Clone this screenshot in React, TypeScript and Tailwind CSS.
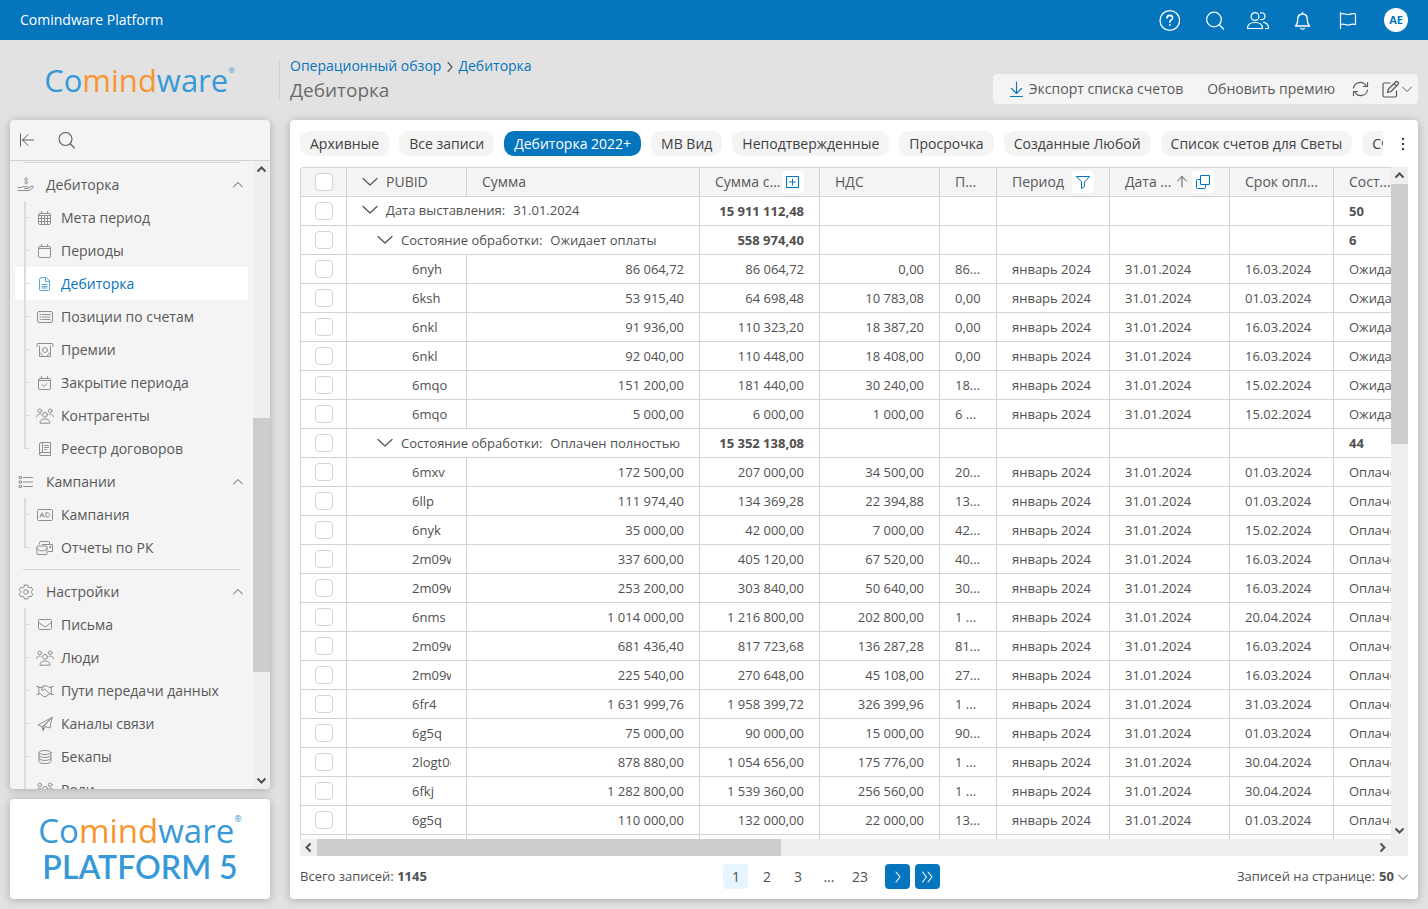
import React from 'react';

type IconProps = { w?: number; h?: number; className?: string; children: React.ReactNode };

const Icon: React.FC<IconProps> = ({ w = 18, h = 18, className = '', children }) => (
  <svg
    width={w}
    height={h}
    viewBox={`0 0 ${w} ${h}`}
    fill="none"
    stroke="currentColor"
    strokeLinecap="round"
    strokeLinejoin="round"
    aria-hidden="true"
    className={`shrink-0 ${className}`}
  >
    {children}
  </svg>
);

const ChevronDown = ({ className = '' }: { className?: string }) => (
  <Icon w={16} h={10} className={className}>
    <path d="M1 1.500 8 8l7-6.500" strokeWidth="1.200" />
  </Icon>
);

const SmallChevron = ({ className = '' }: { className?: string }) => (
  <Icon w={10} h={8} className={className}>
    <path d="M.5 2 5 6.500 9.500 2" />
  </Icon>
);

const PeopleIcon = () => (
  <Icon>
    <circle cx="9" cy="7.800" r="2.400" />
    <path d="M4 15.800c0-2.200 1.500-3.800 5-3.800s5 1.600 5 3.800z" />
    <circle cx="3.800" cy="3.800" r="1.800" />
    <circle cx="14.200" cy="3.800" r="1.800" />
    <path d="M.6 9.800c0-1.800 1.200-2.600 3-2.600.6 0 1 .1 1.400.3M17.400 9.800c0-1.800-1.200-2.600-3-2.600-.6 0-1 .1-1.400.3" />
  </Icon>
);

const CalendarBase = ({ children }: { children?: React.ReactNode }) => (
  <Icon>
    <rect x="2.500" y="4.500" width="12" height="11" rx="1.500" />
    <path d="M5.500 2.500v2M11.500 2.500v2M2.500 6.500h12" />
    {children}
  </Icon>
);

const icons: Record<string, React.ReactNode> = {
  hand: (
    <Icon>
      <path d="M1 11.500h3l2-.8h4c1.500 0 1.500 1.800 0 1.800H7.500M10.800 12l4-1.800c1.500-.5 2.400.8 1.200 1.600L12 14.500H1" />
      <path d="M10.800 3.300C10.300 2 7.400 2.200 7.600 3.700c.2 1.400 3.200.9 3.300 2.500 0 1.500-3 1.600-3.500.3M9.200 1.400v6.800" strokeWidth=".8" />
    </Icon>
  ),
  list: (
    <Icon>
      <path d="M6.500 4.500h9M6.500 9h9M6.500 13.500h9" />
      <path d="M2.500 3.500h2v2h-2zM2.500 8h2v2h-2zM2.500 12.500h2v2h-2z" />
    </Icon>
  ),
  gear: (
    <Icon>
      <path d="M7.500 2h3l.5 2 1.300.8 2-.6 1.500 2.600-1.500 1.500v1.400l1.500 1.500-1.500 2.600-2-.6-1.300.8-.5 2h-3L7 14l-1.300-.8-2 .6-1.500-2.600 1.500-1.500V8.300L2.200 6.800l1.500-2.600 2 .6L7 4z" />
      <circle cx="9" cy="9" r="2.300" />
    </Icon>
  ),
  calendarGrid: (
    <CalendarBase>
      <path d="M2.500 9.500h12M2.500 12.500h12M5.500 6.500v9M8.500 6.500v9M11.500 6.500v9" />
    </CalendarBase>
  ),
  calendar: <CalendarBase />,
  calendarCheck: (
    <CalendarBase>
      <path d="m6 10.700 2 1.800 3-3" />
    </CalendarBase>
  ),
  doc: (
    <Icon>
      <path d="M5.500 2.500h5l3 3.500v8.500a1 1 0 0 1-1 1h-8a1 1 0 0 1-1-1v-10a2 2 0 0 1 2-2z" />
      <path d="M9.500 2.500V6.500h4M6 9.500h5M6 11.500h5M6 13h5" />
    </Icon>
  ),
  positions: (
    <Icon>
      <rect x="1.500" y="3.500" width="15" height="11" rx="1.500" />
      <path d="M4 6.500h.8M6.500 6.500h7.500M4 9h.8M6.500 9h7.500M4 11.500h.8M6.500 11.500h7.500" />
    </Icon>
  ),
  bonus: (
    <Icon>
      <path d="M1 5.500V3.500a1 1 0 0 1 1-1h14a1 1 0 0 1 1 1v2" />
      <path d="M3.500 5v10.500h11V5M3.500 12c2 0 3 1.500 3 3.500M14.500 12c-2 0-3 1.500-3 3.500" />
      <circle cx="9" cy="9" r="2.500" />
    </Icon>
  ),
  people: <PeopleIcon />,
  book: (
    <Icon>
      <path d="M5 2.500h9.500v13H5A1.500 1.500 0 0 1 3.500 14V4A1.500 1.500 0 0 1 5 2.500zM6.500 2.500v10M3.500 14A1.500 1.500 0 0 1 5 12.500h9.500M8.500 5.500h4M8.500 7.500h4M8.500 9.500h2" />
    </Icon>
  ),
  ad: (
    <Icon>
      <rect x="1.500" y="3.500" width="15" height="11" rx="1" />
      <path d="m4 11 2.200-4.200L8.300 11M4.800 9.800h2.800M10 6.800V11h1.300c3.300 0 3.300-4.200 0-4.200z" />
    </Icon>
  ),
  mails: (
    <Icon>
      <path d="M3.500 5V3.500a1 1 0 0 1 1-1h8a1 1 0 0 1 1 1V5M12.500 12.500h4v-7H6.500M14 7.500h1v1h-1z" />
      <path d="M.8 8a1 1 0 0 1 1-1H10a1 1 0 0 1 1 1v6.500a1 1 0 0 1-1 1H1.800a1 1 0 0 1-1-1zM1 9c0 4 10 4 10 0" />
    </Icon>
  ),
  mail: (
    <Icon>
      <rect x="2.500" y="3.500" width="13" height="10" rx="1" />
      <path d="m2.800 6.500 6.200 4.500 6.200-4.500" />
    </Icon>
  ),
  handshake: (
    <Icon>
      <path d="M.8 4.500h2v8h-2M17.200 4.500h-2v8h2M2.800 5.500h3L7.500 4h4L13 5.500h2.200M2.800 11.500h1.500l3.200 3h2.500l4-3h1.200M7.500 4 5.500 8c1 1 2.300.5 3-1l4.800 4.500" />
    </Icon>
  ),
  plane: (
    <Icon>
      <path d="M16 2.500 2 9.800l4 1.700zM16 2.500l-2 10.500-5-1.500M16 2.500 8 11l-1 4.500-1-4M7 15.500l2.500-3.800" />
    </Icon>
  ),
  db: (
    <Icon>
      <ellipse cx="9" cy="4.500" rx="6" ry="2" />
      <path d="M3 4.500V13.500c0 2.700 12 2.700 12 0V4.500M3 7.500c0 2.700 12 2.700 12 0M3 10.500c0 2.700 12 2.700 12 0" />
    </Icon>
  ),
};

const MENU = [
  {
    title: 'Дебиторка',
    icon: 'hand',
    divider: true,
    items: [
      ['Мета период', 'calendarGrid'],
      ['Периоды', 'calendar'],
      ['Дебиторка', 'doc'],
      ['Позиции по счетам', 'positions'],
      ['Премии', 'bonus'],
      ['Закрытие периода', 'calendarCheck'],
      ['Контрагенты', 'people'],
      ['Реестр договоров', 'book'],
    ],
  },
  {
    title: 'Кампании',
    icon: 'list',
    divider: false,
    items: [
      ['Кампания', 'ad'],
      ['Отчеты по РК', 'mails'],
    ],
  },
  {
    title: 'Настройки',
    icon: 'gear',
    divider: true,
    items: [
      ['Письма', 'mail'],
      ['Люди', 'people'],
      ['Пути передачи данных', 'handshake'],
      ['Каналы связи', 'plane'],
      ['Бекапы', 'db'],
      ['Роли', 'people'],
      ['Журналы', 'book'],
    ],
  },
];

const TABS = [
  'Архивные',
  'Все записи',
  'Дебиторка 2022+',
  'МВ Вид',
  'Неподтвержденные',
  'Просрочка',
  'Созданные Любой',
  'Список счетов для Светы',
  'Счета',
];

type Row =
  | { kind: 'group'; level: 0 | 1; label: string; value: string; total: string; count: string }
  | { kind: 'row'; cells: string[] };

const row = (id: string, sum: string, vat: string, tax: string, p: string, due: string, state: string): Row => ({
  kind: 'row',
  cells: [id, sum, vat, tax, p, 'январь 2024', '31.01.2024', due, state],
});

const WAIT = 'Ожидает оплаты';
const PAID = 'Оплачен полностью';

const ROWS: Row[] = [
  { kind: 'group', level: 0, label: 'Дата выставления:', value: '31.01.2024', total: '15 911 112,48', count: '50' },
  { kind: 'group', level: 1, label: 'Состояние обработки:', value: WAIT, total: '558 974,40', count: '6' },
  row('6nyh', '86 064,72', '86 064,72', '0,00', '86...', '16.03.2024', WAIT),
  row('6ksh', '53 915,40', '64 698,48', '10 783,08', '0,00', '01.03.2024', WAIT),
  row('6nkl', '91 936,00', '110 323,20', '18 387,20', '0,00', '16.03.2024', WAIT),
  row('6nkl', '92 040,00', '110 448,00', '18 408,00', '0,00', '16.03.2024', WAIT),
  row('6mqo', '151 200,00', '181 440,00', '30 240,00', '18...', '15.02.2024', WAIT),
  row('6mqo', '5 000,00', '6 000,00', '1 000,00', '6 ...', '15.02.2024', WAIT),
  { kind: 'group', level: 1, label: 'Состояние обработки:', value: PAID, total: '15 352 138,08', count: '44' },
  row('6mxv', '172 500,00', '207 000,00', '34 500,00', '20...', '01.03.2024', PAID),
  row('6llp', '111 974,40', '134 369,28', '22 394,88', '13...', '01.03.2024', PAID),
  row('6nyk', '35 000,00', '42 000,00', '7 000,00', '42...', '15.02.2024', PAID),
  row('2m09w', '337 600,00', '405 120,00', '67 520,00', '40...', '16.03.2024', PAID),
  row('2m09w', '253 200,00', '303 840,00', '50 640,00', '30...', '16.03.2024', PAID),
  row('6nms', '1 014 000,00', '1 216 800,00', '202 800,00', '1 ...', '20.04.2024', PAID),
  row('2m09w', '681 436,40', '817 723,68', '136 287,28', '81...', '16.03.2024', PAID),
  row('2m09w', '225 540,00', '270 648,00', '45 108,00', '27...', '16.03.2024', PAID),
  row('6fr4', '1 631 999,76', '1 958 399,72', '326 399,96', '1 ...', '31.03.2024', PAID),
  row('6g5q', '75 000,00', '90 000,00', '15 000,00', '90...', '01.03.2024', PAID),
  row('2logt0c', '878 880,00', '1 054 656,00', '175 776,00', '1 ...', '30.04.2024', PAID),
  row('6fkj', '1 282 800,00', '1 539 360,00', '256 560,00', '1 ...', '30.04.2024', PAID),
  row('6g5q', '110 000,00', '132 000,00', '22 000,00', '13...', '01.03.2024', PAID),
];

const CELL = 'h-[29px] border-r border-b border-[#d3d3d3] px-[15px] py-0 whitespace-nowrap overflow-hidden';

const RowCheckbox = ({ label }: { label: string }) => (
  <input
    type="checkbox"
    aria-label={label}
    className="block mx-auto size-[18px] appearance-none rounded border border-[#d3d3d3] bg-white"
  />
);

const ScrollArrow = ({ dir }: { dir: 'up' | 'down' | 'left' | 'right' }) => {
  const paths = {
    up: 'M4.500 10.500l4-4 4 4',
    down: 'M4.500 6.500l4 4 4-4',
    left: 'M10.500 4.500l-4 4 4 4',
    right: 'M6.500 4.500l4 4-4 4',
  };
  return (
    <svg width="17" height="17" viewBox="0 0 17 17" fill="none" stroke="#505050" strokeWidth="2" className="shrink-0">
      <path d={paths[dir]} />
    </svg>
  );
};

const Brand = ({ className }: { className: string }) => (
  <span className={`text-[#3899d8] ${className}`}>
    Co<span className="text-[#f99531]">mind</span>ware
  </span>
);

const Header = () => (
  <header className="flex h-10 shrink-0 items-center justify-between bg-[#0575bd] px-5 text-white">
    <span className="text-sm">Comindware Platform</span>
    <div className="flex items-center gap-[21px]">
      <button aria-label="Справка">
        <Icon w={24} h={24}>
          <circle cx="13.800" cy="12.500" r="9.800" strokeWidth="1.300" />
          <path d="M11 10c0-1.700 1.200-2.600 2.800-2.600s2.800 1 2.800 2.500c0 2-2.800 2.100-2.800 4.300M13.800 16.700v.6" strokeWidth="1.600" />
        </Icon>
      </button>
      <button aria-label="Поиск">
        <Icon w={24} h={24}>
          <circle cx="13" cy="11.500" r="7.300" strokeWidth="1.200" />
          <path d="m18.500 17 4 4" strokeWidth="1.200" />
        </Icon>
      </button>
      <button aria-label="Сотрудники">
        <Icon w={24} h={24}>
          <g strokeWidth="1.200">
            <circle cx="9" cy="8.500" r="3.900" />
            <path d="M1.500 20.500c0-4 2.500-6 7.500-6s7.500 2 7.500 6z" />
            <path d="M14.500 4.900c2.300-.6 4.500.7 4.500 3.300s-2.200 3.900-4.500 3.300M17.500 14.300c3.500.4 5 2.200 5 6.200h-3" />
          </g>
        </Icon>
      </button>
      <button aria-label="Уведомления">
        <Icon w={24} h={24}>
          <path d="M4.500 18c2-1.700 2.200-3 2.200-6.500 0-3.300 2-5.500 4.800-5.500s4.800 2.200 4.800 5.500c0 3.500.2 4.800 2.200 6.500zM11.500 6V4.500M9.800 20.300c.8 1 2.600 1 3.400 0" strokeWidth="1.300" />
        </Icon>
      </button>
      <button aria-label="Избранное">
        <Icon w={24} h={24}>
          <path d="M4.500 4.500v16M4.500 6c3-1.500 5 1 8 .5 2.500-.5 4-1.500 7-.5v10.500c-3-1-4.500 0-7 .5-3 .5-5-2-8-.5" strokeWidth="1.200" />
        </Icon>
      </button>
      <button className="ml-[3px] size-6 rounded-full bg-white text-[11px] font-bold leading-6 text-[#0575bd]">AE</button>
    </div>
  </header>
);

const PageHead = () => (
  <div className="flex h-20 shrink-0 items-center pr-2.5 text-[#585858]">
    <a href="#home" className="flex w-[279px] shrink-0 items-start justify-center">
      <Brand className="text-[31px] leading-10" />
      <span className="pt-1 text-[8px] leading-3 text-[#3899d8]">®</span>
    </a>
    <div className="h-10 border-l border-[#d3d3d3] pl-2.5">
      <nav className="flex items-center gap-1 text-sm leading-3 text-[#0575bd]">
        <a href="#overview">Операционный обзор</a>
        <Icon w={9} h={12} className="text-[#585858]">
          <path d="m3 2.500 4 4.500-4 4.500" strokeWidth="1.200" />
        </Icon>
        <a href="#receivables">Дебиторка</a>
      </nav>
      <h1 className="mt-1 text-[19px] leading-7 text-[#6b6b6b]">Дебиторка</h1>
    </div>
    <div className="ml-auto mt-[18px] flex h-[30px] items-center rounded bg-[#f4f4f4] pl-4 pr-1.5 text-sm">
      <button className="flex items-center gap-1">
        <Icon w={16} h={18} className="text-[#0575bd]">
          <path d="M7.500 2v11M2.500 8.500l5 5 5-5M1.500 16.500h12" strokeWidth="1.100" />
        </Icon>
        Экспорт списка счетов
      </button>
      <button className="ml-6">Обновить премию</button>
      <button aria-label="Обновить" className="ml-4">
        <Icon>
          <path d="M2.500 8A6.700 6.700 0 0 1 15 6M16.500 2.500v4h-4M16.500 10A6.700 6.700 0 0 1 4 12M2.500 15.500v-4h4" strokeWidth="1.200" />
        </Icon>
      </button>
      <button aria-label="Правка" className="ml-3 flex items-center gap-0.5">
        <Icon w={19} h={20}>
          <path d="M9 4H3.500A1.500 1.500 0 0 0 2 5.500v11A1.500 1.500 0 0 0 3.500 18H14a1.500 1.500 0 0 0 1.500-1.500V12" strokeWidth="1.200" />
          <path d="M6.500 13.500 7.500 10l7-7c1.500-1.500 4 .8 2.500 2.500l-7 7zM13 4.500 15.500 7" strokeWidth="1.200" />
        </Icon>
        <SmallChevron />
      </button>
    </div>
  </div>
);

const Sidebar = () => (
  <aside className="flex w-[260px] shrink-0 flex-col gap-2.5">
    <div className="flex min-h-0 flex-1 flex-col overflow-hidden rounded bg-[#f4f4f4] shadow-[0_1px_8px_rgba(0,0,0,0.25)]">
      <div className="flex h-[41px] shrink-0 items-center gap-5 border-b border-[#d3d3d3] pl-2 text-[#585858]">
        <button aria-label="Свернуть меню">
          <Icon w={18} h={16}>
            <path d="M2.500 2v12M15.500 8h-11M10 2.500 4.500 8l5.500 5.500" />
          </Icon>
        </button>
        <button aria-label="Поиск по меню">
          <Icon w={20} h={20}>
            <circle cx="9.500" cy="9" r="6.500" strokeWidth="1.100" />
            <path d="m14.500 14 4 4" strokeWidth="1.100" />
          </Icon>
        </button>
      </div>
      <div className="flex min-h-0 flex-1">
        <nav className="min-w-0 flex-1 overflow-hidden text-sm text-[#585858]">
          {MENU.map((group, index) => (
            <section key={group.title}>
              {group.divider && (
                <hr className={`mx-[13px] mb-[5px] border-[#d3d3d3] ${index === 0 ? 'mt-px' : 'mt-[5px]'}`} />
              )}
              <button className="flex h-[33px] w-full items-center pl-[7px] pr-2.5">
                <span className="text-[#8f8f8f]">{icons[group.icon]}</span>
                <span className="ml-[11px] flex-1 text-left">{group.title}</span>
                <SmallChevron className="rotate-180" />
              </button>
              <ul className="px-[5px]">
                {group.items.map(([label, icon], i) => {
                  const active = label === 'Дебиторка';
                  return (
                    <li key={label}>
                      <a
                        href="#section"
                        className={`flex h-[33px] items-center pl-[9px] ${active ? 'bg-white text-[#0575bd]' : ''}`}
                      >
                        <span className="flex h-full w-1.5 shrink-0 flex-col">
                          <span className="h-[17px] border-b border-l-2 border-[#dcdcdc]" />
                          <span className={`flex-1 border-[#dcdcdc] ${i < group.items.length - 1 ? 'border-l-2' : ''}`} />
                        </span>
                        <span className={`ml-1.5 mr-[7px] ${active ? 'text-[#5aa5d6]' : 'text-[#8f8f8f]'}`}>{icons[icon]}</span>
                        {label}
                      </a>
                    </li>
                  );
                })}
              </ul>
            </section>
          ))}
        </nav>
        <div className="flex w-[17px] shrink-0 flex-col bg-[#efefef]">
          <ScrollArrow dir="up" />
          <div className="grow-[240]" />
          <div className="grow-[254] bg-[#cdcdcd]" />
          <div className="grow-[100]" />
          <ScrollArrow dir="down" />
        </div>
      </div>
    </div>
    <div className="flex h-[100px] shrink-0 flex-col items-center justify-center rounded bg-white shadow-[0_1px_8px_rgba(0,0,0,0.25)]">
      <div className="flex items-start">
        <Brand className="text-[33px] leading-9" />
        <span className="text-[9px] leading-3 text-[#3899d8]">®</span>
      </div>
      <span className="font-[Lato] text-[32px] font-semibold leading-9 text-[#3899d8]">PLATFORM 5</span>
    </div>
  </aside>
);

const HeadBadge = ({ label, children }: { label: string; children: React.ReactNode }) => (
  <button aria-label={label} className="flex size-[22px] shrink-0 items-center justify-center rounded bg-white text-[#0575bd]">
    {children}
  </button>
);

const HEAD = 'h-[29px] border-r border-b border-[#d3d3d3] bg-[#f4f4f4] px-[15px] py-0 text-left font-normal whitespace-nowrap overflow-hidden';

const InvoiceTable = () => (
  <table className="w-[1153px] table-fixed border-separate border-spacing-0 text-[13px] leading-5 text-[#505050]">
    <colgroup>
      <col className="w-[46px]" />
      <col className="w-[120px]" />
      <col className="w-[233px]" />
      <col className="w-[120px]" />
      <col className="w-[120px]" />
      <col className="w-[57px]" />
      <col className="w-[113px]" />
      <col className="w-[120px]" />
      <col className="w-[104px]" />
      <col className="w-[120px]" />
    </colgroup>
    <thead className="text-sm text-[#585858]">
      <tr>
        <th className={`${HEAD} px-0!`}>
          <RowCheckbox label="Выбрать все" />
        </th>
        <th className={HEAD}>
          <div className="flex items-center gap-2">
            <ChevronDown />
            PUBID
          </div>
        </th>
        <th className={HEAD}>Сумма</th>
        <th className={HEAD}>
          <div className="flex items-center">
            <span className="min-w-0 flex-1">Сумма с...</span>
            <HeadBadge label="Итог по столбцу">
              <Icon w={14} h={14}>
                <rect x=".5" y="1.500" width="12" height="11" rx=".5" strokeWidth="1.200" />
                <path d="M6.500 4v6M3.500 7h6" />
              </Icon>
            </HeadBadge>
          </div>
        </th>
        <th className={HEAD}>НДС</th>
        <th className={HEAD}>П...</th>
        <th className={HEAD}>
          <div className="flex items-center justify-between">
            Период
            <HeadBadge label="Фильтр">
              <Icon w={14} h={14}>
                <path d="M.5 1.500h13l-5 5.500v4.500l-3 2V7z" />
              </Icon>
            </HeadBadge>
          </div>
        </th>
        <th className={HEAD}>
          <div className="flex items-center">
            <span className="flex-1">Дата ...</span>
            <Icon w={12} h={14} className="mr-1">
              <path d="M6 12V1.500M1.500 6 6 1.500 10.500 6" />
            </Icon>
            <HeadBadge label="Группировка">
              <Icon w={14} h={14}>
                <rect x="4.500" y=".5" width="9" height="9" rx="1" strokeWidth="1.100" />
                <path d="M4.500 4.500h-3a1 1 0 0 0-1 1v7a1 1 0 0 0 1 1h7a1 1 0 0 0 1-1v-3" />
              </Icon>
            </HeadBadge>
          </div>
        </th>
        <th className={HEAD}>Срок опл...</th>
        <th className={HEAD}>Сост...</th>
      </tr>
    </thead>
    <tbody>
      {ROWS.map((item, i) => (
        <tr key={i}>
          <td className={`${CELL} px-0!`}>
            <RowCheckbox label={`Выбрать строку ${i + 1}`} />
          </td>
          {item.kind === 'group' ? (
            <>
              <td colSpan={2} className={CELL}>
                <div className={`flex items-center gap-2 ${item.level === 1 ? 'pl-[15px]' : 'pb-0.5'}`}>
                  <ChevronDown />
                  <span>{item.label}</span>
                  <span>{item.value}</span>
                </div>
              </td>
              <td className={`${CELL} text-right font-bold`}>{item.total}</td>
              <td className={CELL} />
              <td className={CELL} />
              <td className={CELL} />
              <td className={CELL} />
              <td className={CELL} />
              <td className={`${CELL} font-bold`}>{item.count}</td>
            </>
          ) : (
            item.cells.map((text, col) => (
              <td key={col} className={`${CELL} ${col > 0 && col < 4 ? 'text-right' : ''}`}>
                {col === 0 ? <div className="ml-[50px] overflow-hidden">{text}</div> : text}
              </td>
            ))
          )}
        </tr>
      ))}
      <tr>
        {Array.from({ length: 10 }, (_, i) => (
          <td key={i} className={CELL} />
        ))}
      </tr>
    </tbody>
  </table>
);

const Pager = () => (
  <div className="mt-2 flex h-[25px] shrink-0 items-center justify-between text-[13px] text-[#505050]">
    <span>
      Всего записей: <b>1145</b>
    </span>
    <div className="flex items-center gap-1.5 text-sm">
      {['1', '2', '3', '...', '23'].map((page) => (
        <button key={page} className={`h-[25px] w-[25px] rounded ${page === '1' ? 'bg-[#e6f5ff]' : ''}`}>
          {page}
        </button>
      ))}
      <div className="ml-[7px] flex gap-[5px] text-white">
        <button aria-label="Следующая" className="flex size-[25px] items-center justify-center rounded bg-[#0575bd]">
          <Icon w={13} h={13}>
            <path d="m5 2 4 5-4 5" strokeWidth="1.100" />
          </Icon>
        </button>
        <button aria-label="Последняя" className="flex size-[25px] items-center justify-center rounded bg-[#0575bd]">
          <Icon w={13} h={13}>
            <path d="m1.500 2 4 5-4 5M7 2l4 5-4 5" strokeWidth="1.100" />
          </Icon>
        </button>
      </div>
    </div>
    <label className="flex items-center">
      Записей на странице:
      <select className="ml-1 appearance-none bg-transparent font-bold" defaultValue="50">
        <option>50</option>
      </select>
      <SmallChevron className="ml-1" />
    </label>
  </div>
);

const App: React.FC = () => (
  <div className="flex h-screen flex-col overflow-hidden bg-[#e2e2e2] font-['Open_Sans',sans-serif]">
    <Header />
    <PageHead />
    <div className="flex min-h-0 flex-1 gap-5 px-2.5 pb-2.5">
      <Sidebar />
      <main className="flex min-w-0 flex-1 flex-col rounded bg-white px-2.5 pt-[11px] pb-2.5 shadow-[0_1px_8px_rgba(0,0,0,0.25)]">
        <div className="flex h-[25px] shrink-0 items-center">
          <div className="flex min-w-0 flex-1 gap-2.5 overflow-hidden">
            {TABS.map((tab) => (
              <button
                key={tab}
                className={`h-[25px] shrink-0 rounded-[10px] px-2.5 text-sm leading-[25px] ${
                  tab === 'Дебиторка 2022+' ? 'bg-[#0575bd] text-white' : 'bg-[#f4f4f4] text-[#404040]'
                }`}
              >
                {tab}
              </button>
            ))}
          </div>
          <button aria-label="Ещё" className="ml-[15px]">
            <svg width="10" height="16" viewBox="0 0 10 16" fill="#404040">
              <circle cx="5" cy="3" r="1.200" />
              <circle cx="5" cy="8" r="1.200" />
              <circle cx="5" cy="13" r="1.200" />
            </svg>
          </button>
        </div>
        <div className="mt-[11px] flex min-h-0 flex-1">
          <div className="min-w-0 flex-1 overflow-hidden rounded-tl border-t border-l border-[#d3d3d3]">
            <InvoiceTable />
          </div>
          <div className="flex w-[17px] shrink-0 flex-col bg-[#efefef]">
            <ScrollArrow dir="up" />
            <div className="grow-[260] bg-[#cdcdcd]" />
            <div className="grow-[378]" />
            <ScrollArrow dir="down" />
          </div>
        </div>
        <div className="flex h-[17px] shrink-0 bg-[#efefef] pr-[17px]">
          <ScrollArrow dir="left" />
          <div className="grow-[464] bg-[#cdcdcd]" />
          <div className="grow-[593]" />
          <ScrollArrow dir="right" />
        </div>
        <Pager />
      </main>
    </div>
  </div>
);

export default App;
